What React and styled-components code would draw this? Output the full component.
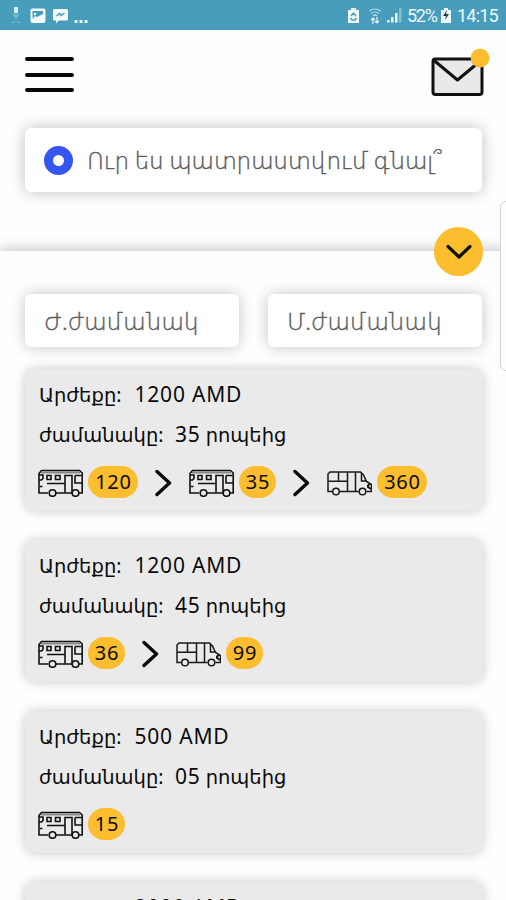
import React from "react";
import styled, { createGlobalStyle } from "styled-components";

const Global = createGlobalStyle`
  * { box-sizing: border-box; }
  html, body { margin: 0; background: #fff; }
  body { overflow: hidden; font-family: "Noto Sans", "DejaVu Sans", sans-serif; }
`;

const Screen = styled.div`
  position: relative;
  width: 506px;
  height: 900px;
  overflow: hidden;
  background: #fefefe;
  color: #0a0a0a;
`;

const StatusBar = styled.div`
  height: 30px;
  padding: 0 9px;
  display: flex;
  align-items: center;
  justify-content: space-between;
  background: #489dbd;
`;

const StatusGroup = styled.div`
  display: flex;
  align-items: center;
  height: 30px;
`;

const StatusIcon = styled.svg`
  display: block;
  flex: none;
  margin-top: 2px;
  margin-right: ${(p) => p.$gap || 0}px;
`;

const StatusText = styled.span`
  font: 400 18px/30px Roboto, sans-serif;
  color: #eef8fb;
  width: ${(p) => p.$w}px;
  margin-right: ${(p) => p.$gap || 0}px;
  padding-top: 2px;
  letter-spacing: ${(p) => p.$ls}px;
  white-space: nowrap;
`;

const Header = styled.header`
  height: 98px;
  padding: 18px 16px 0 25px;
  display: flex;
  justify-content: space-between;
`;

const MailIcon = styled.svg`
  display: block;
  flex: none;
`;

const MenuButton = styled.div`
  margin-top: 9px;
  width: 49px;
  height: 35px;
  display: flex;
  flex-direction: column;
  justify-content: space-between;
`;

const MenuLine = styled.span`
  height: 4px;
  border-radius: 2px;
  background: #080808;
`;

const SearchArea = styled.div`
  height: 123px;
  padding: 0 24px 0 25px;
`;

const SearchBox = styled.div`
  height: 64px;
  padding-left: 19px;
  display: flex;
  align-items: center;
  gap: 14px;
  border-radius: 6px;
  background: #fff;
  box-shadow: 0 0 16px rgba(0, 0, 0, 0.25);
`;

const Marker = styled.span`
  width: 29px;
  height: 29px;
  border-radius: 50%;
  border: 9px solid #3556f0;
  background: #fff;
`;

const Placeholder = styled.span`
  font-weight: 300;
  font-size: 23.2px;
  letter-spacing: ${(p) => p.$ls || 0}px;
  line-height: 32px;
  color: #5c5c5c;
  -webkit-text-stroke: 0.4px #5c5c5c;
  white-space: nowrap;
`;

const Sheet = styled.main`
  position: relative;
  height: 700px;
  padding: 43px 23px 0 25px;
  background: #fefefe;
  box-shadow: 0 -3px 12px rgba(0, 0, 0, 0.2);
`;

const ToggleButton = styled.div`
  position: absolute;
  top: -24px;
  right: 23px;
  width: 49px;
  height: 49px;
  border-radius: 50%;
  background: #fcbd2e;
  display: flex;
  align-items: center;
  justify-content: center;
`;

const Fields = styled.div`
  display: grid;
  grid-template-columns: 214px 214px;
  column-gap: 29px;
  margin-bottom: 22px;
`;

const Field = styled.div`
  height: 53px;
  padding-left: 19px;
  display: flex;
  align-items: center;
  border-radius: 6px;
  background: #fff;
  box-shadow: 0 0 15px rgba(0, 0, 0, 0.23);
`;

const Cards = styled.div`
  display: flex;
  flex-direction: column;
  gap: 29px;
`;

const Card = styled.article`
  height: 142px;
  padding: 6px 13px 0;
  border-radius: 10px;
  background: #eaeaea;
  box-shadow: 0 0 12px rgba(0, 0, 0, 0.22);
`;

const Line = styled.div`
  height: 40px;
  display: flex;
  align-items: baseline;
  font-size: 19.5px;
  line-height: 40px;
  white-space: pre;
`;

const Label = styled.span`
  width: ${(p) => p.$w}px;
  padding-left: 1px;
`;

const Value = styled.span`
  font-size: 21px;
  line-height: 38px;
  letter-spacing: 0.8px;
`;

const Unit = styled.span`
  margin-left: 5px;
`;

const Route = styled.div`
  height: 33px;
  margin: 10px 0 0 -1px;
  display: flex;
  align-items: center;
`;

const Pill = styled.span`
  width: ${(p) => (p.$wide ? 50 : 37)}px;
  height: 32px;
  margin-left: 5px;
  padding-left: 1px;
  border-radius: 17px;
  background: #fcbd2e;
  font-size: 20px;
  letter-spacing: 0.8px;
  line-height: 31px;
  text-align: center;
`;

const RouteIcon = styled.svg`
  display: block;
  flex: none;
`;

const Arrow = styled.svg`
  display: block;
  flex: none;
  margin: 3px 16px 0 17px;
`;

const EdgePanel = styled.div`
  position: absolute;
  left: 500px;
  top: 201px;
  width: 12px;
  height: 170px;
  border: 1px solid #d2d2d2;
  border-radius: 6px;
  background: #fdfdfd;
`;

const Bus = () => (
  <RouteIcon width="46" height="30" viewBox="0 0 46 30" fill="none" stroke="#111" strokeWidth="1.6">
    <path d="M11 26H2V6.5L4.5 3.5H42.5L45.2 6V26H42M35 26H19" />
    <path d="M4 5.5H43" stroke="#888" strokeWidth="1.8" />
    <path d="M2 8H6V11.5L4.5 13H2M10 8.5H14V12.5H10ZM18.5 8.5H23V12.5H18.5Z" strokeWidth="1.6" />
    <path d="M28 25.5V8.5H35V25.5M10 16.5H28M3 19.5H5.5M38 8.5V16H45M38 8.5H44.5" />
    <circle cx="15.5" cy="26" r="3.3" fill="#eaeaea" />
    <circle cx="38.5" cy="26" r="3.3" fill="#eaeaea" />
  </RouteIcon>
);

const Van = () => (
  <RouteIcon width="46" height="30" viewBox="0 0 46 30" fill="none" stroke="#181818" strokeWidth="1.5">
    <path d="M6.5 24.5H2V7L4 5H34.5L37.5 8L40.5 14.5L45.5 17.5V24.5H40.5M32.5 24.5H14" />
    <path d="M2 14.2H21.5M12.5 5V14M21.5 5V24M29.5 5V24M35.5 6V14H41" />
    <path d="M44.5 16.5L42 18.5V20L45 22" strokeWidth="2" />
    <circle cx="10" cy="24.5" r="3.3" fill="#eaeaea" />
    <circle cx="36.5" cy="24.5" r="3.3" fill="#eaeaea" />
  </RouteIcon>
);

const Chevron = () => (
  <Arrow width="17" height="28" viewBox="0 0 17 28" fill="none" stroke="#0a0a0a" strokeWidth="3.4" strokeLinecap="round" strokeLinejoin="round">
    <path d="M2 2.5L14.5 14L2 25.5" />
  </Arrow>
);

const trips = [
  { price: "1200 AMD", time: "35", legs: [["bus", "120"], ["bus", "35"], ["van", "360"]] },
  { price: "1200 AMD", time: "45", legs: [["bus", "36"], ["van", "99"]] },
  { price: "500 AMD", time: "05", legs: [["bus", "15"]] },
  { price: "2000 AMD" },
];

const Trip = ({ price, time, legs }) => (
  <Card>
    <Line>
      <Label $w={96.5}>Արժեքը:</Label>
      <Value>{price}</Value>
    </Line>
    {time && (
      <Line>
        <Label $w={137}>ժամանակը:</Label>
        <Value>{time}</Value>
        <Unit>րոպեից</Unit>
      </Line>
    )}
    {legs && (
      <Route>
        {legs.map(([kind, number], i) => (
          <React.Fragment key={number}>
            {i > 0 && <Chevron />}
            {kind === "bus" ? <Bus /> : <Van />}
            <Pill $wide={number.length > 2}>{number}</Pill>
          </React.Fragment>
        ))}
      </Route>
    )}
  </Card>
);

export default function App() {
  return (
    <Screen>
      <Global />
      <StatusBar>
        <StatusGroup>
          <StatusIcon $gap={7} width="14" height="20" viewBox="0 0 14 20">
            <rect x="5" y="1" width="4" height="6" fill="#d9eef6" />
            <path d="M3 8H11L7 13Z" fill="#73b7d0" />
            <path d="M2 16.5H12" stroke="#73b7d0" />
          </StatusIcon>
          <StatusIcon $gap={7} width="16" height="16" viewBox="0 0 16 16">
            <rect x="0.5" y="0.5" width="15" height="14.5" rx="2" fill="#f3fbfd" />
            <path d="M2.5 3H13V6L10 7.5L7 9L5 8L2.5 11Z" fill="#489dbd" />
            <circle cx="5" cy="6" r="1.2" fill="#fff" />
          </StatusIcon>
          <StatusIcon $gap={6} width="15" height="16" viewBox="0 0 15 16">
            <path d="M1.5 1H13.5Q15 1 15 2.5V11Q15 12.5 13.5 12.5H6L3 15.5V12.5H1.5Q0 12.5 0 11V2.5Q0 1 1.5 1Z" fill="#f3fbfd" />
            <path d="M3.5 8L6.5 5.5L8 7.5L11.5 5" fill="none" stroke="#489dbd" strokeWidth="1.5" />
          </StatusIcon>
          <StatusIcon width="15" height="20" viewBox="0 0 15 20" fill="#eef8fb">
            <rect x="0.5" y="14" width="3" height="3" />
            <rect x="5.5" y="14" width="3" height="3" />
            <rect x="10.5" y="14" width="3" height="3" />
          </StatusIcon>
        </StatusGroup>
        <StatusGroup>
          <StatusIcon $gap={10} width="11" height="17" viewBox="0 0 11 17">
            <path d="M3 0H8V2H11V15H0V2H3Z" fill="#eef8fb" />
            <path d="M3 8L5.5 5L8 8M2.5 10L4 12H7L8.5 10" fill="none" stroke="#489dbd" strokeWidth="1.4" />
          </StatusIcon>
          <StatusIcon $gap={6} width="12" height="17" viewBox="0 0 12 17" fill="none" stroke="#b5dae7" strokeWidth="1.2">
            <path d="M0.5 3Q6 -1 11.5 3M2 5.5Q6 2.5 10 5.5M4 8Q6 6 8 8" />
            <path d="M4 16V10M2 12L4 10L6 12M8 9V15M6 13L8 15L10 13" stroke="#eef8fb" />
          </StatusIcon>
          <StatusIcon $gap={5} width="15" height="16" viewBox="0 0 15 16" fill="#eef8fb">
            <path d="M0 12H2.5V14.5H0ZM4 9H6.5V14.5H4ZM8 5H10.5V14.5H8Z" />
            <path d="M12 0H14.5V14.5H12Z" fill="#85bdd1" />
          </StatusIcon>
          <StatusText $w={29} $gap={5} $ls={-1.3}>52%</StatusText>
          <StatusIcon $gap={6} width="10" height="17" viewBox="0 0 10 17">
            <path d="M3 0H7V2H10V15H0V2H3Z" fill="#eef8fb" />
            <path d="M6 2L2 8H5L4 12L8 6H5Z" fill="#1b3d4a" />
          </StatusIcon>
          <StatusText $w={40} $ls={-0.8}>14:15</StatusText>
        </StatusGroup>
      </StatusBar>
      <Header>
        <MenuButton>
          <MenuLine />
          <MenuLine />
          <MenuLine />
        </MenuButton>
        <MailIcon width="60" height="50" viewBox="0 0 60 50">
          <rect x="3" y="11" width="49" height="35.5" rx="2.5" fill="#e9e9e9" stroke="#111" strokeWidth="3" />
          <path d="M3.5 12L27.5 32L51.5 12" fill="none" stroke="#111" strokeWidth="3" strokeLinejoin="round" />
          <circle cx="50" cy="10" r="9.4" fill="#fcbd2e" />
        </MailIcon>
      </Header>
      <SearchArea>
        <SearchBox>
          <Marker />
          <Placeholder $ls={-0.3}>Ուր ես պատրաստվում գնալ՞</Placeholder>
        </SearchBox>
      </SearchArea>
      <Sheet>
        <ToggleButton>
          <svg width="26" height="16" viewBox="0 0 26 16" fill="none" stroke="#111" strokeWidth="3.2" strokeLinecap="round" strokeLinejoin="round">
            <path d="M2 2.5L13 13L24 2.5" />
          </svg>
        </ToggleButton>
        <Fields>
          <Field><Placeholder>Ժ.ժամանակ</Placeholder></Field>
          <Field><Placeholder>Մ.ժամանակ</Placeholder></Field>
        </Fields>
        <Cards>
          {trips.map((trip, i) => <Trip key={i} {...trip} />)}
        </Cards>
      </Sheet>
      <EdgePanel />
    </Screen>
  );
}
